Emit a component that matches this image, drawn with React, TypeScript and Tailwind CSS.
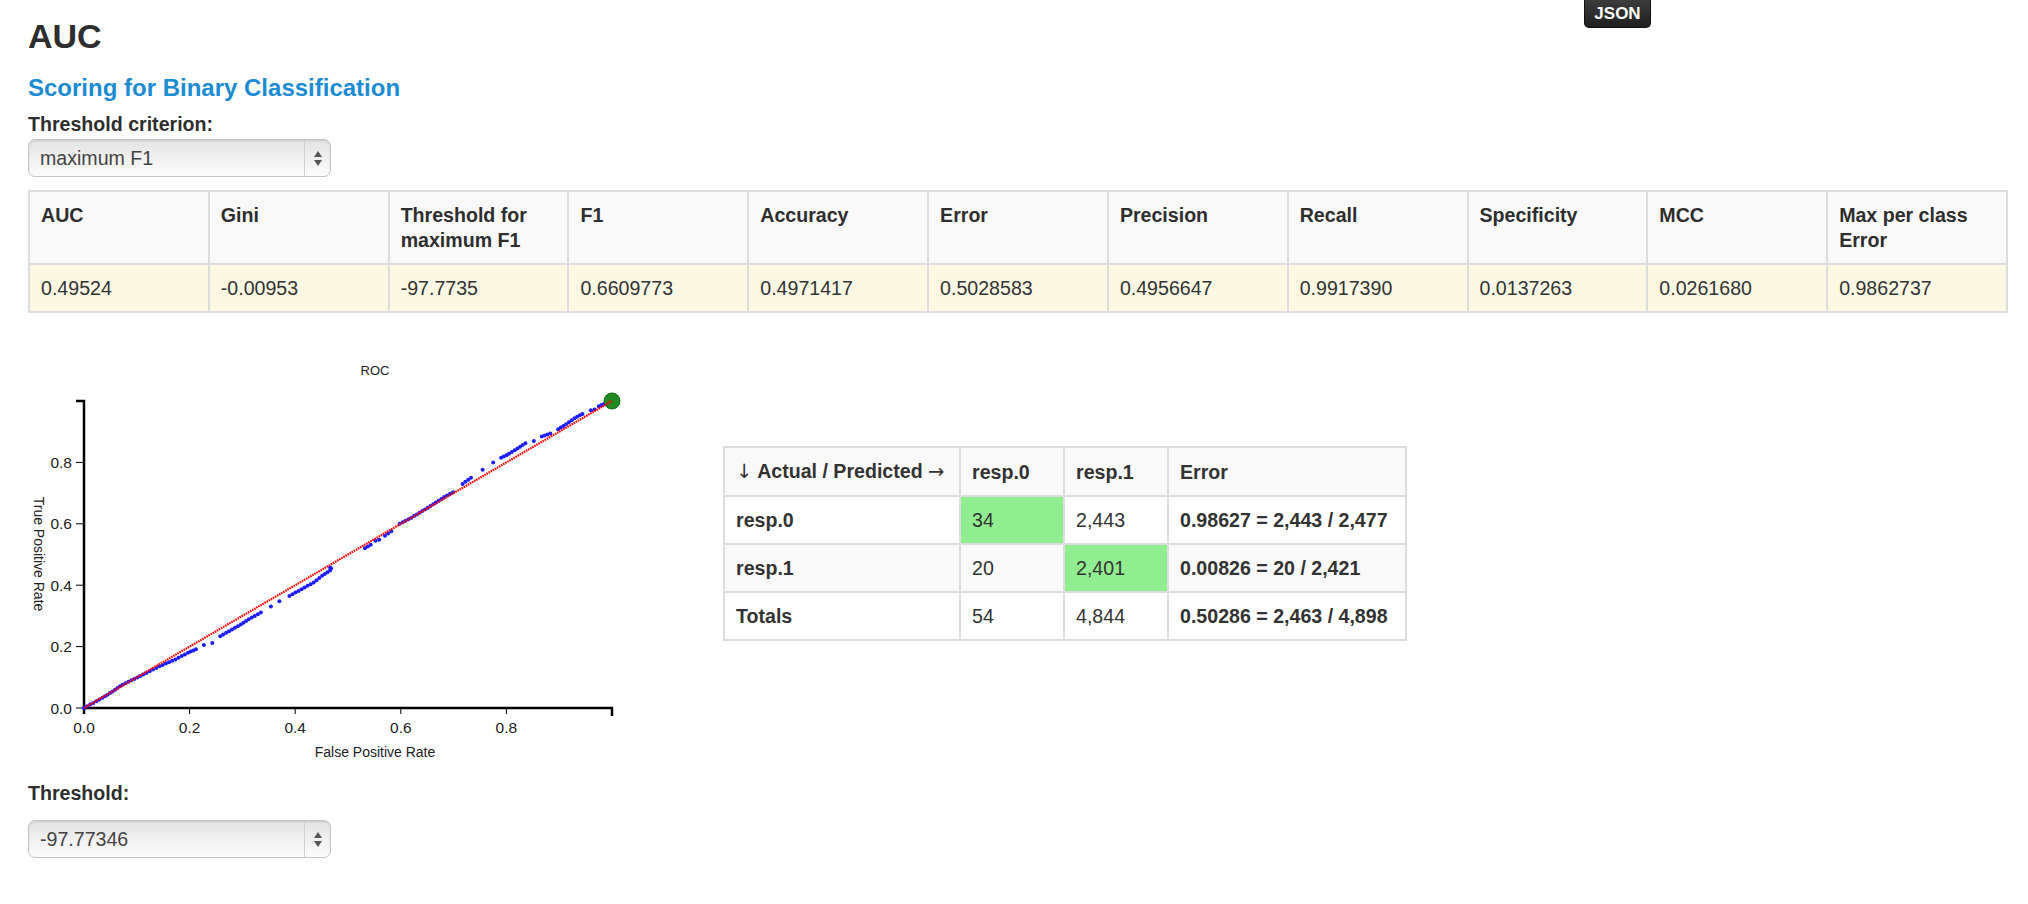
import React from "react";

const X0 = 56;
const Y0 = 375;
const W = 528;
const H = 307;
const sx = (f: number) => X0 + f * W;
const sy = (t: number) => Y0 - t * H;

type P = [number, number];

// dense polylines of the ROC curve
const dense: P[][] = [
  [
    [0, 0],
    [0.035, 0.033],
    [0.054, 0.054],
    [0.073, 0.076],
    [0.112, 0.109],
    [0.143, 0.136],
    [0.173, 0.158],
    [0.197, 0.18],
    [0.212, 0.191],
  ],
  [
    [0.258, 0.234],
    [0.297, 0.272],
    [0.312, 0.289],
    [0.335, 0.311],
  ],
  [
    [0.389, 0.365],
    [0.412, 0.387],
    [0.435, 0.409],
    [0.451, 0.431],
    [0.466, 0.448],
  ],
  [
    [0.532, 0.52],
    [0.543, 0.532],
  ],
  [
    [0.57, 0.561],
    [0.582, 0.576],
  ],
  [
    [0.598, 0.6],
    [0.62, 0.62],
    [0.651, 0.652],
    [0.682, 0.687],
    [0.699, 0.703],
  ],
  [
    [0.717, 0.73],
    [0.733, 0.75],
  ],
  [
    [0.79, 0.815],
    [0.805, 0.828],
    [0.821, 0.845],
    [0.836, 0.862],
  ],
  [
    [0.867, 0.884],
    [0.883, 0.894],
  ],
  [
    [0.898, 0.908],
    [0.913, 0.924],
    [0.929, 0.944],
    [0.944, 0.958],
  ],
  [
    [0.975, 0.983],
    [0.99, 0.994],
  ],
];

const singles: P[] = [
  [0.227, 0.205],
  [0.243, 0.212],
  [0.354, 0.331],
  [0.37, 0.348],
  [0.466, 0.458],
  [0.468, 0.454],
  [0.552, 0.545],
  [0.559, 0.548],
  [0.755, 0.776],
  [0.775, 0.8],
  [0.852, 0.87],
  [0.96, 0.97],
  [0.967, 0.972],
];

function buildDots(): P[] {
  const out: P[] = [];
  for (const line of dense) {
    for (let i = 0; i < line.length - 1; i++) {
      const [ax, ay] = line[i];
      const [bx, by] = line[i + 1];
      const dx = sx(bx) - sx(ax);
      const dy = sy(by) - sy(ay);
      const len = Math.sqrt(dx * dx + dy * dy);
      const n = Math.max(1, Math.round(len / 3.4));
      for (let k = 0; k < n; k++) {
        const t = k / n;
        out.push([sx(ax) + dx * t, sy(ay) + dy * t]);
      }
    }
    const last = line[line.length - 1];
    out.push([sx(last[0]), sy(last[1])]);
  }
  for (const [a, b] of singles) out.push([sx(a), sy(b)]);
  return out;
}

const dots = buildDots();

function RocChart() {
  const ticks = [0, 0.2, 0.4, 0.6, 0.8];
  const font = "'Liberation Sans', Arial, sans-serif";
  return (
    <svg width={600} height={448} className="block shrink-0">
      <text x={347} y={41.5} textAnchor="middle" fontSize={13} fontFamily={font} fill="#222">
        ROC
      </text>
      {/* y axis */}
      <path
        d={`M${X0 - 8},${sy(1)}H${X0}V${Y0}`}
        fill="none"
        stroke="#000"
        strokeWidth={2.5}
      />
      {ticks.map((t) => (
        <g key={"y" + t}>
          <line x1={X0 - 8} x2={X0} y1={sy(t)} y2={sy(t)} stroke="#000" strokeWidth={1} />
          <text
            x={44}
            y={sy(t) + 5.6}
            textAnchor="end"
            fontSize={15.5}
            fontFamily={font}
            fill="#222"
          >
            {t.toFixed(1)}
          </text>
        </g>
      ))}
      {/* x axis */}
      <path
        d={`M${X0},${Y0 + 6}V${Y0}H${sx(1)}V${Y0 + 8}`}
        fill="none"
        stroke="#000"
        strokeWidth={2.5}
      />
      {ticks.map((t) => (
        <g key={"x" + t}>
          <line x1={sx(t)} x2={sx(t)} y1={Y0} y2={Y0 + 6} stroke="#000" strokeWidth={1} />
          <text
            x={sx(t)}
            y={399.5}
            textAnchor="middle"
            fontSize={15.5}
            fontFamily={font}
            fill="#222"
          >
            {t.toFixed(1)}
          </text>
        </g>
      ))}
      <text x={347} y={424} textAnchor="middle" fontSize={14} fontFamily={font} fill="#222">
        False Positive Rate
      </text>
      <text
        transform="translate(6,221) rotate(90)"
        textAnchor="middle"
        fontSize={14}
        fontFamily={font}
        fill="#222"
      >
        True Positive Rate
      </text>
      {/* points */}
      {dots.map(([x, y], i) => (
        <circle key={i} cx={x} cy={y} r={2} fill="#1c1cff" />
      ))}
      <circle cx={sx(1)} cy={sy(1)} r={8} fill="#1f8a1f" stroke="#156915" strokeWidth={1} />
      <line
        x1={sx(0)}
        y1={sy(0)}
        x2={sx(1)}
        y2={sy(1)}
        stroke="#ff0000"
        strokeWidth={2.2}
        strokeDasharray="1.6 0.8"
      />
    </svg>
  );
}

function FakeSelect({ value }: { value: string }) {
  return (
    <div className="flex h-[38px] w-[303px] items-center rounded-[7px] border-[1.5px] border-[#c6c6c6] bg-gradient-to-b from-[#e3e3e3] via-[#f0f0f0] to-[#fcfcfc] shadow-[inset_0_1px_2px_rgba(0,0,0,0.12)]">
      <span className="pl-[11px] text-[19.6px] leading-[25px] text-[#444]">{value}</span>
      <div className="ml-auto flex h-full w-[26px] flex-col items-center justify-center gap-[3px] border-l-[1.5px] border-[#d0d0d0]">
        <svg width="8" height="6" viewBox="0 0 8 6">
          <path d="M4 0 L8 6 L0 6 Z" fill="#555" />
        </svg>
        <svg width="8" height="6" viewBox="0 0 8 6">
          <path d="M0 0 L8 0 L4 6 Z" fill="#555" />
        </svg>
      </div>
    </div>
  );
}

const metricHeads = [
  "AUC",
  "Gini",
  "Threshold for maximum F1",
  "F1",
  "Accuracy",
  "Error",
  "Precision",
  "Recall",
  "Specificity",
  "MCC",
  "Max per class Error",
];
const metricVals = [
  "0.49524",
  "-0.00953",
  "-97.7735",
  "0.6609773",
  "0.4971417",
  "0.5028583",
  "0.4956647",
  "0.9917390",
  "0.0137263",
  "0.0261680",
  "0.9862737",
];

export default function App() {
  return (
    <div className="relative h-[904px] w-[2028px] overflow-hidden bg-white font-['Liberation_Sans',Arial,sans-serif] text-[#333]">
      <button className="absolute left-[1584px] top-0 flex h-[28px] w-[67px] items-center justify-center rounded-b-[5px] border border-t-0 border-[#111] bg-gradient-to-b from-[#3c3c3c] to-[#1f1f1f] text-[17px] font-bold text-white">
        JSON
      </button>
      <div className="pl-[28px] pt-[16px]">
        <h1 className="text-[34px] font-bold leading-[40px] text-[#2e2e2e]">AUC</h1>
        <h2 className="mt-[17px] text-[24px] font-bold leading-[30px] text-[#1d8bd1]">
          Scoring for Binary Classification
        </h2>
        <div className="mt-[9px] text-[19.6px] font-bold leading-[25px] text-[#2e2e2e]">
          Threshold criterion:
        </div>
        <div className="mt-[2px]">
          <FakeSelect value="maximum F1" />
        </div>

        <table className="mt-[13px] w-[1980px] table-fixed border-collapse border-2 border-[#dddddd] text-[19.6px] leading-[25px]">
          <thead>
            <tr className="bg-[#f9f9f9]">
              {metricHeads.map((h) => (
                <th
                  key={h}
                  className="border-2 border-[#dddddd] px-[11px] py-[10.5px] text-left align-top font-bold text-[#2e2e2e]"
                >
                  {h}
                </th>
              ))}
            </tr>
          </thead>
          <tbody>
            <tr className="bg-[#fcf8e3]">
              {metricVals.map((v, i) => (
                <td key={i} className="border-2 border-[#dddddd] px-[11px] py-[10.5px] text-left">
                  {v}
                </td>
              ))}
            </tr>
          </tbody>
        </table>

        <div className="mt-[20px] flex items-start">
          <RocChart />
          <table className="ml-[95px] mt-[113px] w-[682px] table-fixed border-collapse border-2 border-[#dddddd] text-[19.6px] leading-[24px]">
            <thead>
              <tr className="bg-[#f9f9f9]">
                <th className="w-[236px] whitespace-nowrap border-2 border-[#dddddd] px-[11px] py-[11px] text-left font-bold">
                  <span className="font-['DejaVu_Sans',sans-serif] font-normal">↓</span> Actual / Predicted{" "}
                  <span className="font-['DejaVu_Sans',sans-serif] font-normal">→</span>
                </th>
                <th className="w-[104px] border-2 border-[#dddddd] px-[11px] py-[11px] text-left font-bold">
                  resp.0
                </th>
                <th className="w-[104px] border-2 border-[#dddddd] px-[11px] py-[11px] text-left font-bold">
                  resp.1
                </th>
                <th className="w-[238px] border-2 border-[#dddddd] px-[11px] py-[11px] text-left font-bold">
                  Error
                </th>
              </tr>
            </thead>
            <tbody>
              <tr className="bg-white">
                <td className="border-2 border-[#dddddd] px-[11px] py-[11px] font-bold">resp.0</td>
                <td className="border-2 border-[#dddddd] bg-[#90ee90] px-[11px] py-[11px]">34</td>
                <td className="border-2 border-[#dddddd] px-[11px] py-[11px]">2,443</td>
                <td className="border-2 border-[#dddddd] px-[11px] py-[11px] font-bold">
                  0.98627 = 2,443 / 2,477
                </td>
              </tr>
              <tr className="bg-[#f9f9f9]">
                <td className="border-2 border-[#dddddd] px-[11px] py-[11px] font-bold">resp.1</td>
                <td className="border-2 border-[#dddddd] px-[11px] py-[11px]">20</td>
                <td className="border-2 border-[#dddddd] bg-[#90ee90] px-[11px] py-[11px]">2,401</td>
                <td className="border-2 border-[#dddddd] px-[11px] py-[11px] font-bold">
                  0.00826 = 20 / 2,421
                </td>
              </tr>
              <tr className="bg-white">
                <td className="border-2 border-[#dddddd] px-[11px] py-[11px] font-bold">Totals</td>
                <td className="border-2 border-[#dddddd] px-[11px] py-[11px]">54</td>
                <td className="border-2 border-[#dddddd] px-[11px] py-[11px]">4,844</td>
                <td className="border-2 border-[#dddddd] px-[11px] py-[11px] font-bold">
                  0.50286 = 2,463 / 4,898
                </td>
              </tr>
            </tbody>
          </table>
        </div>

        <div className="text-[19.6px] font-bold leading-[25px] text-[#2e2e2e]">Threshold:</div>
        <div className="mt-[14px]">
          <FakeSelect value="-97.77346" />
        </div>
      </div>
    </div>
  );
}
